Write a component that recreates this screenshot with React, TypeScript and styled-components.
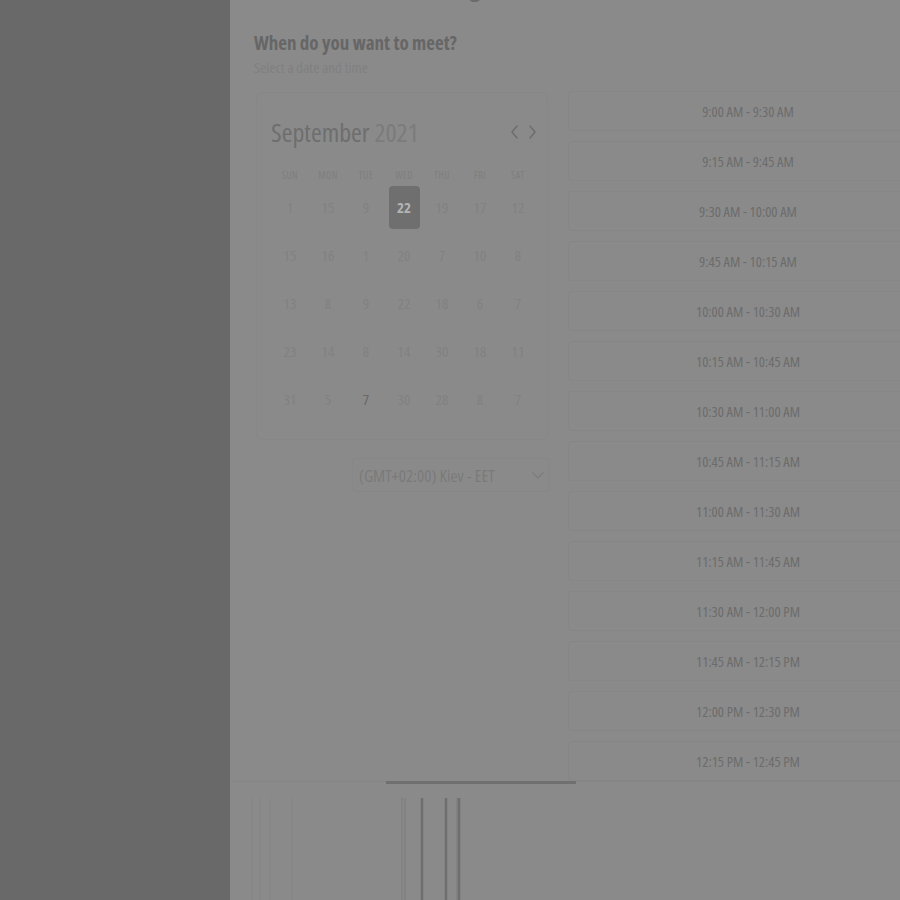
import React from "react";
import styled, { createGlobalStyle } from "styled-components";

const Global = createGlobalStyle`
  html, body { margin: 0; padding: 0; background: #696969; }
  body { font-family: "Open Sans", "Noto Sans", "Liberation Sans", sans-serif; font-stretch: 80%; }
  * { box-sizing: border-box; }
`;

const Page = styled.div`
  display: grid;
  grid-template-columns: 230px 670px;
  width: 900px;
  height: 900px;
  overflow: hidden;
`;

const Sidebar = styled.div`
  background: #696969;
`;

const Panel = styled.div`
  background: #8a8a8a;
  height: 900px;
  overflow: hidden;
  padding-left: 24px;
  display: flex;
  flex-direction: column;
`;

const TopTitle = styled.h1`
  margin: -31px 0 0 0;
  height: 34px;
  font-size: 26px;
  font-weight: 700;
  color: #6c6c6c;
  line-height: 34px;
  padding-left: 32px;
`;

const Heading = styled.h2`
  margin: 28px 0 0 0;
  font-size: 19px;
  font-weight: 700;
  line-height: 24px;
  color: #666666;
`;

const Sub = styled.p`
  margin: 2px 0 0 0;
  font-size: 15px;
  line-height: 20px;
  color: #808080;
`;

const Columns = styled.div`
  display: flex;
  gap: 18px;
  margin-top: 14px;
  align-items: flex-start;
`;

const LeftCol = styled.div`
  display: flex;
  flex-direction: column;
  align-items: flex-end;
  width: 296px;
  flex-shrink: 0;
  margin-top: 1px;
  padding-left: 2px;
`;

const Card = styled.div`
  width: 292px;
  height: 348px;
  align-self: flex-start;
  border: 1px solid #878787;
  border-radius: 6px;
  padding: 22px 12px 0 14px;
`;

const CardHead = styled.div`
  display: flex;
  align-items: center;
  justify-content: space-between;
  height: 34px;
`;

const Month = styled.div`
  font-size: 26px;
  font-weight: 400;
  color: #6e6e6e;
  line-height: 34px;
`;

const Year = styled.span`
  color: #7b7b7b;
`;

const Arrows = styled.div`
  display: flex;
  gap: 5px;
  margin-right: -3px;
`;

const ArrowBtn = styled.span`
  display: flex;
  width: 12px;
  height: 16px;
  align-items: center;
  justify-content: center;
`;

const Grid = styled.div`
  display: grid;
  grid-template-columns: repeat(7, 38px);
  margin-top: 18px;
`;

const WeekDay = styled.div`
  height: 16px;
  font-size: 10px;
  line-height: 16px;
  text-align: center;
  color: #7e7e7e;
  letter-spacing: 0.5px;
`;

const Cell = styled.div`
  height: 48px;
  display: flex;
  align-items: center;
  justify-content: center;
`;

const Day = styled.div<{ $selected?: boolean; $dark?: boolean }>`
  width: 31px;
  height: 43px;
  border-radius: 4px;
  display: flex;
  align-items: center;
  justify-content: center;
  font-size: 15px;
  font-weight: ${(p) => (p.$selected ? 700 : 400)};
  background: ${(p) => (p.$selected ? "#6f6f6f" : "transparent")};
  color: ${(p) => (p.$selected ? "#b4b4b4" : p.$dark ? "#666666" : "#818181")};
`;

const Select = styled.div`
  margin-top: 18px;
  width: 198px;
  height: 34px;
  border: 1px solid #878787;
  border-radius: 4px;
  display: flex;
  align-items: center;
  justify-content: space-between;
  padding: 0 4px 0 6px;
  font-size: 17px;
  color: #7a7a7a;
`;

const SlotList = styled.div`
  display: flex;
  flex-direction: column;
  gap: 10px;
`;

const Slot = styled.div`
  width: 360px;
  height: 40px;
  border: 1px solid #868686;
  border-radius: 4px;
  display: flex;
  align-items: center;
  justify-content: center;
  font-size: 14.5px;
  font-weight: 400;
  color: #6c6c6c;
`;

const Footer = styled.div`
  margin-left: -24px;
  border-top: 1px solid #858585;
  display: flex;
  flex-direction: column;
`;

const ScrollTrack = styled.div`
  margin-left: 156px;
  width: 190px;
  height: 3px;
  background: #707070;
  margin-top: -1px;
`;

const Stripes = styled.svg`
  display: block;
  margin-top: 14px;
`;

const days: number[][] = [
  [1, 15, 9, 22, 19, 17, 12],
  [15, 16, 1, 20, 7, 10, 8],
  [13, 8, 9, 22, 18, 6, 7],
  [23, 14, 8, 14, 30, 18, 11],
  [31, 5, 7, 30, 28, 8, 7],
];

const weekDays = ["SUN", "MON", "TUE", "WED", "THU", "FRI", "SAT"];

const slots = [
  "9:00 AM - 9:30 AM",
  "9:15 AM - 9:45 AM",
  "9:30 AM - 10:00 AM",
  "9:45 AM - 10:15 AM",
  "10:00 AM - 10:30 AM",
  "10:15 AM - 10:45 AM",
  "10:30 AM - 11:00 AM",
  "10:45 AM - 11:15 AM",
  "11:00 AM - 11:30 AM",
  "11:15 AM - 11:45 AM",
  "11:30 AM - 12:00 PM",
  "11:45 AM - 12:15 PM",
  "12:00 PM - 12:30 PM",
  "12:15 PM - 12:45 PM",
];

const Chevron = ({ dir }: { dir: "left" | "right" | "down" }) => {
  const d =
    dir === "left" ? "M8 2 L3 8 L8 14" : dir === "right" ? "M4 2 L9 8 L4 14" : "M2 4 L7 9 L12 4";
  const vb = dir === "down" ? "0 0 14 12" : "0 0 12 16";
  const w = dir === "down" ? 14 : 12;
  const h = dir === "down" ? 12 : 16;
  return (
    <svg width={w} height={h} viewBox={vb} fill="none">
      <path d={d} stroke={dir === "down" ? "#7d7d7d" : "#6c6c6c"} strokeWidth={1.4} strokeLinecap="round" strokeLinejoin="round" />
    </svg>
  );
};

export default function App() {
  return (
    <>
      <Global />
      <Page>
        <Sidebar />
        <Panel>
          <TopTitle>Schedule a meeting</TopTitle>
          <Heading>When do you want to meet?</Heading>
          <Sub>Select a date and time</Sub>
          <Columns>
            <LeftCol>
              <Card>
                <CardHead>
                  <Month>
                    September <Year>2021</Year>
                  </Month>
                  <Arrows>
                    <ArrowBtn>
                      <Chevron dir="left" />
                    </ArrowBtn>
                    <ArrowBtn>
                      <Chevron dir="right" />
                    </ArrowBtn>
                  </Arrows>
                </CardHead>
                <Grid>
                  {weekDays.map((w) => (
                    <WeekDay key={w}>{w}</WeekDay>
                  ))}
                  {days.map((row, ri) =>
                    row.map((d, ci) => (
                      <Cell key={`${ri}-${ci}`}>
                        <Day $selected={ri === 0 && ci === 3} $dark={ri === 4 && ci === 2}>
                          {d}
                        </Day>
                      </Cell>
                    ))
                  )}
                </Grid>
              </Card>
              <Select>
                <span>(GMT+02:00) Kiev - EET</span>
                <Chevron dir="down" />
              </Select>
            </LeftCol>
            <SlotList>
              {slots.map((s) => (
                <Slot key={s}>{s}</Slot>
              ))}
            </SlotList>
          </Columns>
          <Footer>
            <ScrollTrack />
            <Stripes width="670" height="110" viewBox="0 0 670 110">
              <g stroke="#848484" strokeWidth="1">
                <line x1="22" y1="0" x2="22" y2="110" />
                <line x1="30" y1="0" x2="30" y2="110" />
                <line x1="40" y1="0" x2="40" y2="110" />
                <line x1="62" y1="0" x2="62" y2="110" />
              </g>
              <g stroke="#7a7a7a" strokeWidth="1">
                <line x1="172" y1="0" x2="172" y2="110" />
                <line x1="175" y1="0" x2="175" y2="110" />
                <line x1="227" y1="0" x2="227" y2="110" />
              </g>
              <g stroke="#6e6e6e" strokeWidth="2.5">
                <line x1="192" y1="0" x2="192" y2="110" />
                <line x1="216" y1="0" x2="216" y2="110" />
                <line x1="229" y1="0" x2="229" y2="110" />
              </g>
            </Stripes>
          </Footer>
        </Panel>
      </Page>
    </>
  );
}
